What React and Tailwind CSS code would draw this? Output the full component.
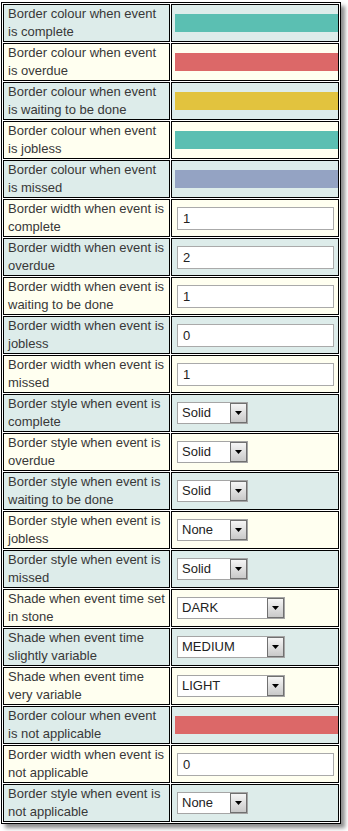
import React from 'react'

const rows = [
    { label: 'Border colour when event is complete', type: 'colour', value: 'bg-[#5bbfb2]' },
    { label: 'Border colour when event is overdue', type: 'colour', value: 'bg-[#dc6868]' },
    { label: 'Border colour when event is waiting to be done', type: 'colour', value: 'bg-[#e2c33e]' },
    { label: 'Border colour when event is jobless', type: 'colour', value: 'bg-[#5bbfb2]' },
    { label: 'Border colour when event is missed', type: 'colour', value: 'bg-[#94a3c3]' },
    { label: 'Border width when event is complete', type: 'text', value: '1' },
    { label: 'Border width when event is overdue', type: 'text', value: '2' },
    { label: 'Border width when event is waiting to be done', type: 'text', value: '1' },
    { label: 'Border width when event is jobless', type: 'text', value: '0' },
    { label: 'Border width when event is missed', type: 'text', value: '1' },
    { label: 'Border style when event is complete', type: 'select', value: 'Solid' },
    { label: 'Border style when event is overdue', type: 'select', value: 'Solid' },
    { label: 'Border style when event is waiting to be done', type: 'select', value: 'Solid' },
    { label: 'Border style when event is jobless', type: 'select', value: 'None' },
    { label: 'Border style when event is missed', type: 'select', value: 'Solid' },
    { label: 'Shade when event time set in stone', type: 'shade', value: 'DARK' },
    { label: 'Shade when event time slightly variable', type: 'shade', value: 'MEDIUM' },
    { label: 'Shade when event time very variable', type: 'shade', value: 'LIGHT' },
    { label: 'Border colour when event is not applicable', type: 'colour', value: 'bg-[#dc6868]' },
    { label: 'Border width when event is not applicable', type: 'text', value: '0' },
    { label: 'Border style when event is not applicable', type: 'select', value: 'None' },
]

// fake dropdown, classic windows look
const Dropdown = ({ value, wide }) => (
    <div className={`ml-[2px] flex h-[22px] items-stretch border border-[#a5a5a5] bg-white ${wide ? 'w-[108px]' : 'w-[71px]'}`}>
        <span className="flex-1 pl-[4px] text-[13px] leading-[20px] text-[#222]">{value}</span>
        <span className="flex w-[17px] items-center justify-center border border-[#707070] bg-gradient-to-b from-[#f6f6f6] to-[#c9c9c9]">
            <svg width="7" height="4" viewBox="0 0 7 4">
                <polygon points="0,0 7,0 3.5,4" fill="#000" />
            </svg>
        </span>
    </div>
)

const Field = ({ row }) => {
    if (row.type === 'colour') {
        return <div className={`h-[18px] w-[163px] ${row.value}`} />
    }
    if (row.type === 'text') {
        return (
            <input
                readOnly
                value={row.value}
                className="ml-[2px] block h-[23px] w-[157px] border border-[#aaaaaa] bg-white pl-[5px] text-[13px] text-[#222] outline-none"
            />
        )
    }
    return <Dropdown value={row.value} wide={row.type === 'shade'} />
}

export default function App() {
    return (
        <div className="min-h-screen bg-white pt-[2px] pl-[1px] font-['Liberation_Sans',Arial,sans-serif]">
            <table className="w-[340px] table-fixed border-separate border-spacing-[1px] border border-black bg-white shadow-[4px_4px_4px_rgba(0,0,0,0.45)]">
                <tbody>
                    {rows.map((row, i) => (
                        <tr key={i} className={i % 2 === 0 ? 'bg-[#ddecea]' : 'bg-[#fffff0]'}>
                            <td className="w-[167px] border border-black pl-[4px] pr-[3px] py-0 align-middle text-[13px] leading-[18px] text-[#383838]">
                                {row.label}
                            </td>
                            <td className="w-[168px] border border-black pl-[3px] pr-0 py-0 align-middle">
                                <Field row={row} />
                            </td>
                        </tr>
                    ))}
                </tbody>
            </table>
        </div>
    )
}
